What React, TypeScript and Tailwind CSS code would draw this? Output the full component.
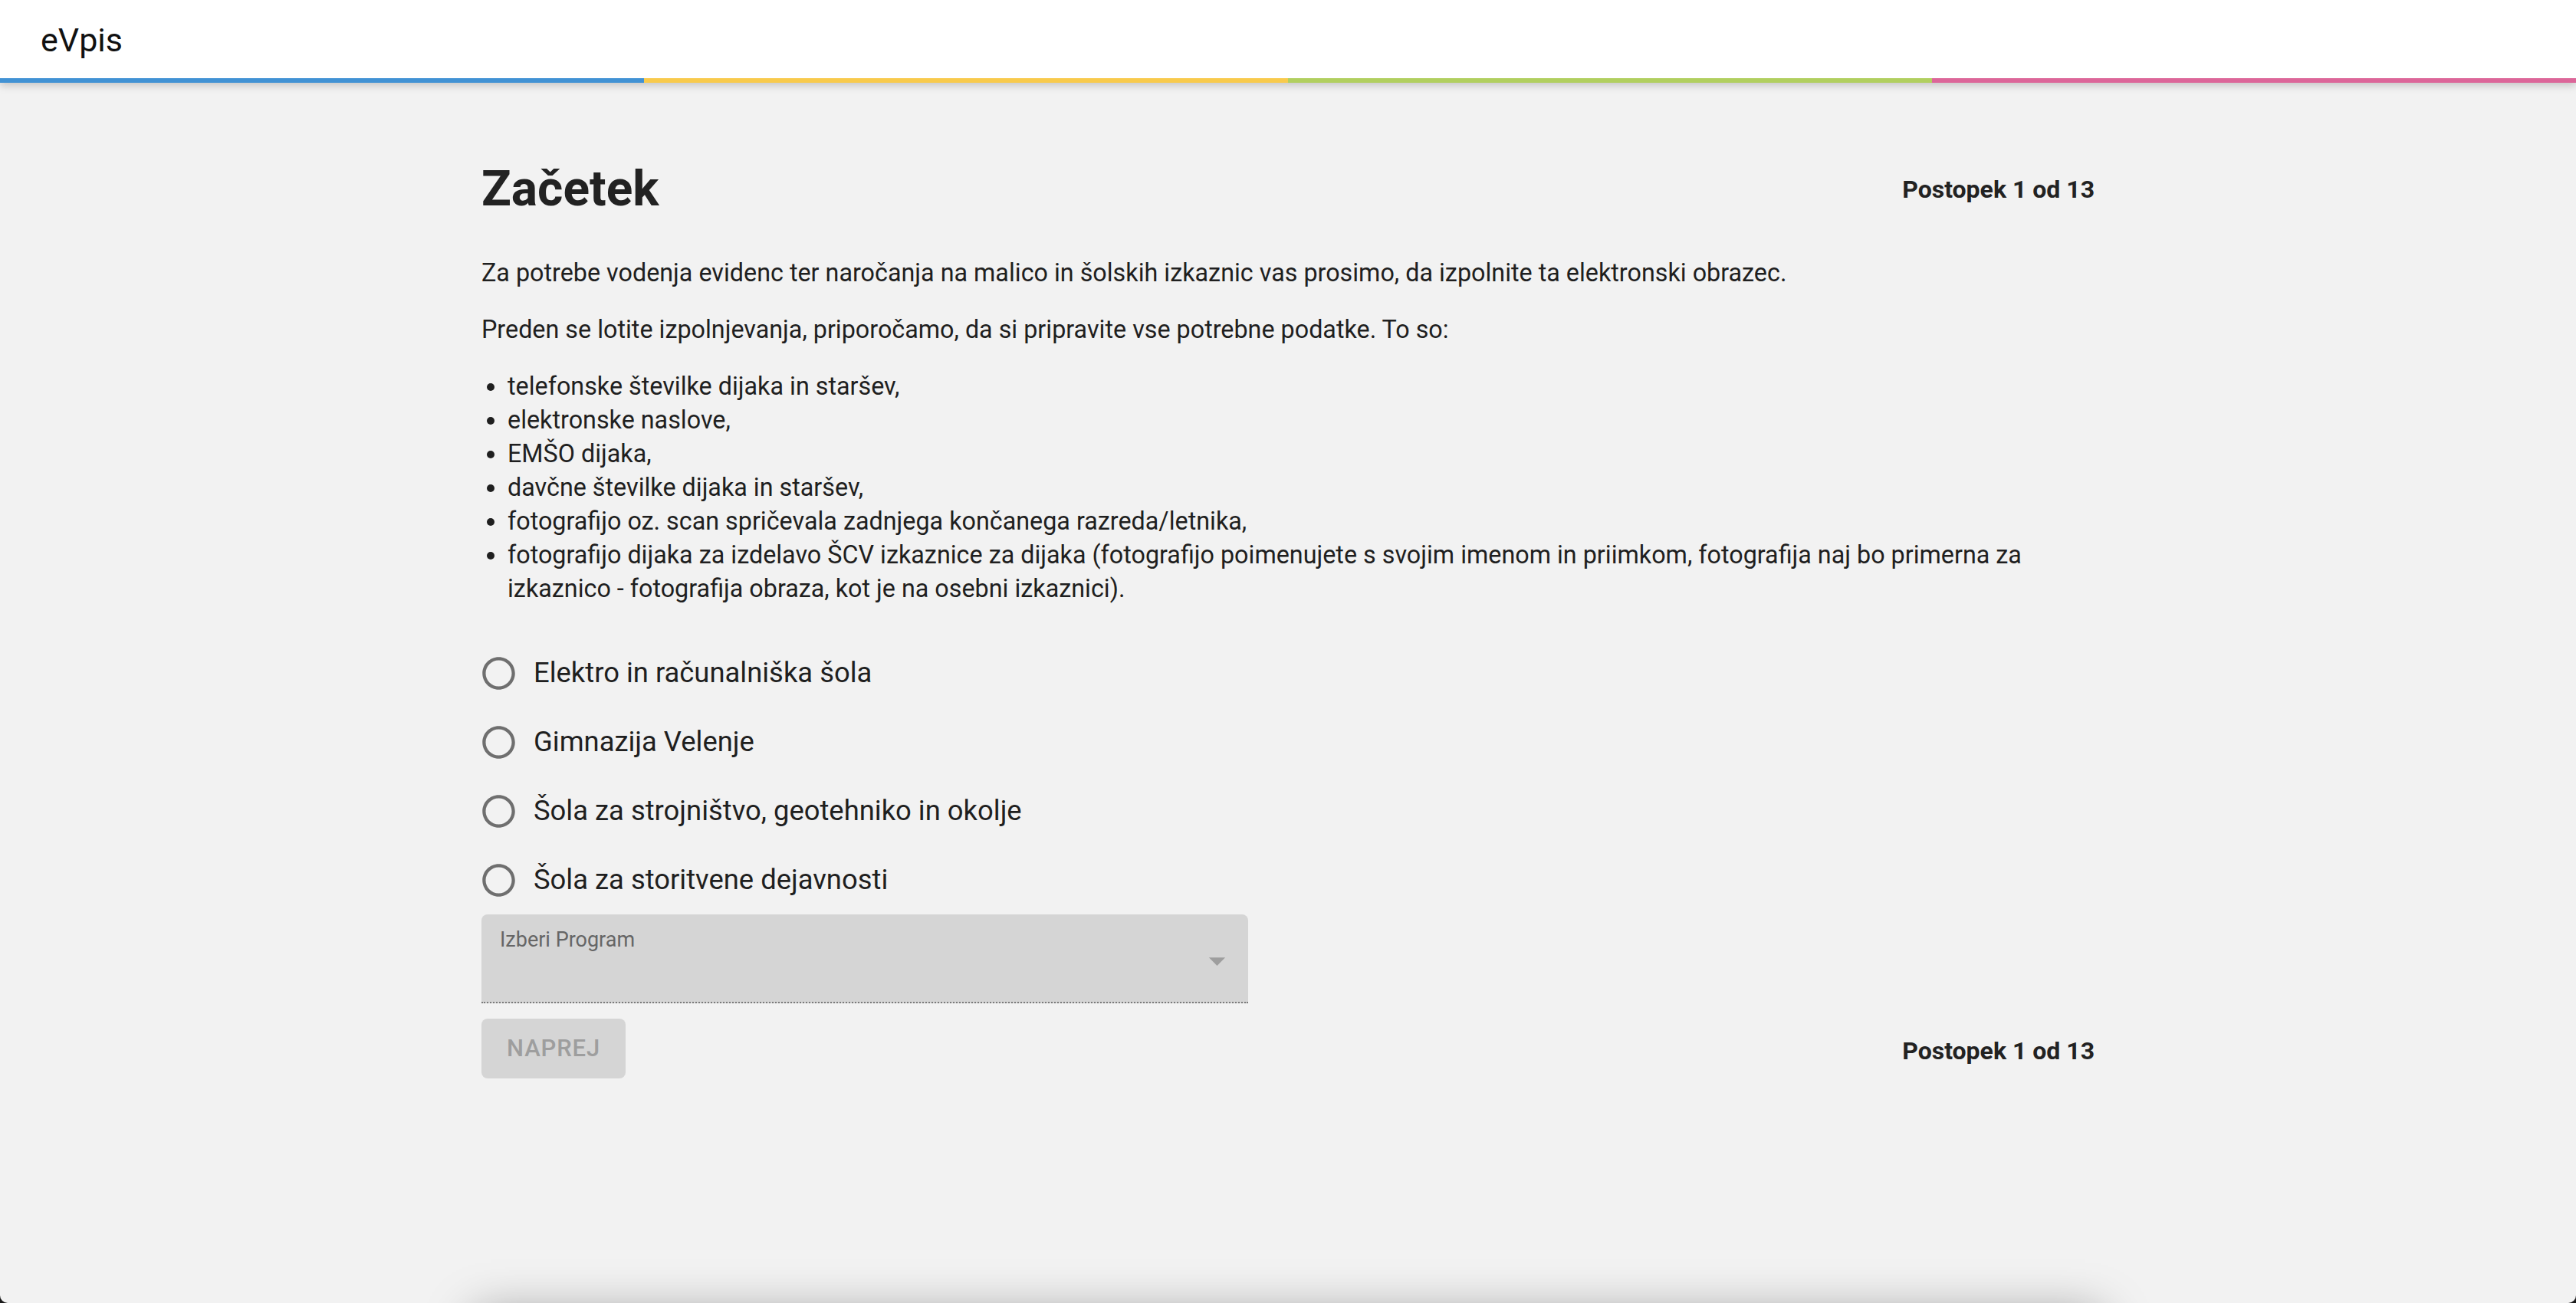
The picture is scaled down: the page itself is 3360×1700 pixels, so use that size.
import { ReactNode } from 'react';

const bars = ['bg-[#4192d4]', 'bg-[#f8ca4c]', 'bg-[#b1cf5f]', 'bg-[#dc6699]'];

const needed: string[] = [
  'telefonske številke dijaka in staršev,',
  'elektronske naslove,',
  'EMŠO dijaka,',
  'davčne številke dijaka in staršev,',
  'fotografijo oz. scan spričevala zadnjega končanega razreda/letnika,',
  'fotografijo dijaka za izdelavo ŠCV izkaznice za dijaka (fotografijo poimenujete s svojim imenom in priimkom, fotografija naj bo primerna za izkaznico - fotografija obraza, kot je na osebni izkaznici).',
];

const schools: string[] = [
  'Elektro in računalniška šola',
  'Gimnazija Velenje',
  'Šola za strojništvo, geotehniko in okolje',
  'Šola za storitvene dejavnosti',
];

function Step({ children }: { children: ReactNode }) {
  return <span className="text-[32px] font-bold leading-[44px] text-[#222]">{children}</span>;
}

function RadioIcon() {
  return (
    <svg viewBox="0 0 24 24" className="h-[51px] w-[51px] fill-[#6f6f6f]">
      <path d="M12 2C6.48 2 2 6.48 2 12s4.48 10 10 10 10-4.48 10-10S17.52 2 12 2zm0 18c-4.42 0-8-3.58-8-8s3.58-8 8-8 8 3.58 8 8-3.58 8-8 8z" />
    </svg>
  );
}

function App() {
  return (
    <div className="h-[1700px] overflow-hidden bg-[#1a1a1a] font-['Roboto',sans-serif]">
      <div className="h-full overflow-hidden rounded-b-[10px] bg-[#f2f2f2]">
        {/* top bar */}
        <header className="relative z-10 bg-white shadow-[0_4px_10px_rgba(0,0,0,0.18)]">
          <div className="flex h-[102px] items-center pl-[53px] pt-[2px] text-[43px] text-[#111]">eVpis</div>
          <div className="flex h-[6px]">
            {bars.map((bar) => (
              <div key={bar} className={`flex-1 ${bar}`} />
            ))}
          </div>
        </header>

        <main className="mx-auto flex w-[2104px] flex-col pt-[99px] text-[#1f1f1f]">
          {/* heading */}
          <div className="flex items-center justify-between">
            <h1 className="text-[64px] font-bold leading-[80px] text-[#222]">Začetek</h1>
            <Step>Postopek 1 od 13</Step>
          </div>

          {/* intro */}
          <p className="mt-[47px] text-[32.3px] leading-[44px]">
            Za potrebe vodenja evidenc ter naročanja na malico in šolskih izkaznic vas prosimo, da izpolnite ta elektronski obrazec.
          </p>
          <p className="mt-[30px] text-[32.3px] leading-[44px]">
            Preden se lotite izpolnjevanja, priporočamo, da si pripravite vse potrebne podatke. To so:
          </p>
          <ul className="mt-[30px] list-disc pl-[34px] text-[32.3px] leading-[44px]">
            {needed.map((item) => (
              <li key={item}>{item}</li>
            ))}
          </ul>

          {/* school radios */}
          <div className="mt-[43px] flex flex-col">
            {schools.map((school) => (
              <label key={school} className="-ml-[23px] flex h-[90px] items-center">
                <span className="p-[19.5px]">
                  <RadioIcon />
                </span>
                <span className="pl-[1px] text-[36.4px]">{school}</span>
              </label>
            ))}
          </div>

          {/* program select (disabled) */}
          <div className="relative h-[116px] w-[1000px] rounded-t-[8px] border-b-2 border-dotted border-[#7b7b7b] bg-[#d5d5d5] pl-[24px] pt-[20px]">
            <span className="block text-[27px] leading-[27px] text-[#666]">Izberi Program</span>
            <svg viewBox="0 0 24 24" className="absolute right-[15px] top-[35px] h-[51px] w-[51px] fill-[#9e9e9e]">
              <path d="M7 10l5 5 5-5z" />
            </svg>
          </div>

          {/* footer row */}
          <div className="mt-[20px] flex items-center justify-between">
            <button
              disabled
              className="h-[78px] rounded-[8px] bg-[#d5d5d5] px-[33px] text-[31px] font-medium uppercase tracking-[0.86px] text-[#9e9e9e]"
            >
              Naprej
            </button>
            <span className="pt-[6px]">
              <Step>Postopek 1 od 13</Step>
            </span>
          </div>
        </main>

        {/* next card, below the fold */}
        <div className="mx-auto mt-[309px] h-[200px] w-[2120px] bg-[#f2f2f2] shadow-[0_0_60px_rgba(0,0,0,0.4)]" />
      </div>
    </div>
  );
}

export default App;
